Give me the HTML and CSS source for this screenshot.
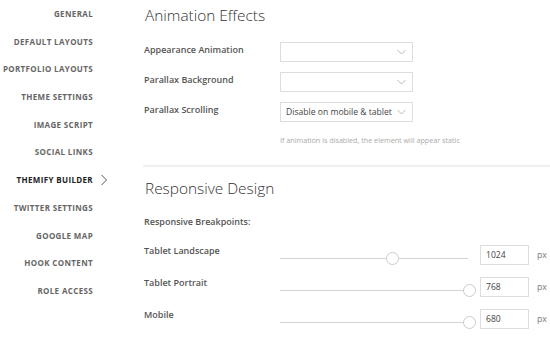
FILE: index.html
```html
<!DOCTYPE html>
<html lang="en">
<head>
  <meta charset="UTF-8" />
  <title>Themify Builder Settings</title>
  <link rel="stylesheet" href="styles.css">
</head>
<body>
  <div class="page">
    <ul class="sidebar">
      <li>General</li>
      <li>Default Layouts</li>
      <li>Portfolio Layouts</li>
      <li>Theme Settings</li>
      <li>Image Script</li>
      <li>Social Links</li>
      <li class="active">Themify Builder
        <svg class="chevron" width="8" height="12" viewBox="0 0 8 12"><path d="M1.5 1 L6.5 6 L1.5 11" fill="none" stroke="#555" stroke-width="1"/></svg>
      </li>
      <li>Twitter Settings</li>
      <li>Google Map</li>
      <li>Hook Content</li>
      <li>Role Access</li>
    </ul>

    <div class="main">
      <h2>Animation Effects</h2>
      <div class="field">
        <label>Appearance Animation</label>
        <div class="select"><span></span><svg class="caret" width="9" height="6" viewBox="0 0 9 6"><path d="M0.5 1 L4.5 5 L8.5 1" fill="none" stroke="#bbb" stroke-width="1"/></svg></div>
      </div>
      <div class="field">
        <label>Parallax Background</label>
        <div class="select"><span></span><svg class="caret" width="9" height="6" viewBox="0 0 9 6"><path d="M0.5 1 L4.5 5 L8.5 1" fill="none" stroke="#bbb" stroke-width="1"/></svg></div>
      </div>
      <div class="field">
        <label>Parallax Scrolling</label>
        <div class="select"><span>Disable on mobile &amp; tablet</span><svg class="caret" width="9" height="6" viewBox="0 0 9 6"><path d="M0.5 1 L4.5 5 L8.5 1" fill="none" stroke="#bbb" stroke-width="1"/></svg></div>
      </div>
      <p class="hint">If animation is disabled, the element will appear static</p>

      <hr class="divider">

      <h2>Responsive Design</h2>
      <div class="sub">Responsive Breakpoints:</div>
      <div class="bp">
        <label>Tablet Landscape</label>
        <div class="range"><div class="track"></div><span class="thumb" style="left: 112px"></span></div>
        <div class="num">1024</div>
        <span class="unit">px</span>
      </div>
      <div class="bp">
        <label>Tablet Portrait</label>
        <div class="range"><div class="track"></div><span class="thumb" style="left: 189px"></span></div>
        <div class="num">768</div>
        <span class="unit">px</span>
      </div>
      <div class="bp">
        <label>Mobile</label>
        <div class="range"><div class="track"></div><span class="thumb" style="left: 189px"></span></div>
        <div class="num">680</div>
        <span class="unit">px</span>
      </div>
    </div>
  </div>
</body>
</html>
```
FILE: styles.css
```css
body {
  margin: 0;
  background: #fff;
  font-family: 'Open Sans', sans-serif;
  color: #444;
}

.page {
  display: flex;
  width: 550px;
  height: 342px;
  overflow: hidden;
}

.sidebar {
  list-style: none;
  margin: 0;
  padding: 0;
  width: 93px;
  flex-shrink: 0;
}

.sidebar li {
  position: relative;
  text-align: right;
  height: 27.7px;
  line-height: 28px;
  font-size: 8px;
  font-weight: bold;
  letter-spacing: 0.35px;
  text-transform: uppercase;
  color: #666;
  white-space: nowrap;
}

.sidebar li.active {
  color: #222;
}

.chevron {
  position: absolute;
  left: 100px;
  top: 8px;
}

.main {
  margin-left: 51px;
  flex: 1;
}

h2 {
  font-size: 15.4px;
  font-weight: 300;
  color: #333;
  margin: 5px 0 0 1px;
  line-height: 22px;
}

.field {
  display: flex;
  align-items: center;
  height: 20px;
  margin-top: 10px;
}

.field:first-of-type {
  margin-top: 15px;
}

label {
  font-size: 9px;
  font-weight: 600;
  color: #555;
  width: 136px;
  flex-shrink: 0;
  position: relative;
  top: -3px;
}

.select {
  height: 18px;
  border: 1px solid #ddd;
  display: flex;
  align-items: center;
  justify-content: space-between;
  padding: 0 6px 0 5px;
  box-sizing: content-box;
  width: 120px;
  font-size: 8.6px;
  color: #444;
}

.hint {
  margin: 13px 0 0 136px;
  font-size: 7.2px;
  color: #aaa;
}

.divider {
  border: 0;
  height: 2px;
  background: #f0f0f0;
  margin: 20px 0 0 -1px;
}

.divider + h2 {
  margin-top: 11px;
}

.sub {
  font-size: 9px;
  font-weight: 600;
  color: #555;
  margin-top: 15px;
}

.bp {
  display: flex;
  align-items: flex-start;
  height: 20px;
  margin-top: 17px;
}

.bp + .bp {
  margin-top: 12px;
}

.bp label {
  top: 0;
  line-height: 12px;
}

.range {
  position: relative;
  width: 188px;
  height: 20px;
}

.track {
  position: absolute;
  left: 0;
  right: 0;
  top: 13px;
  height: 1px;
  background: #d4d4d4;
}

.thumb {
  position: absolute;
  top: 7px;
  width: 11px;
  height: 11px;
  margin-left: -6px;
  border: 1px solid #ccc;
  border-radius: 50%;
  background: #fff;
}

.num {
  width: 42px;
  height: 18px;
  border: 1px solid #ddd;
  margin-left: 12px;
  padding-left: 5px;
  font-size: 8.6px;
  line-height: 18px;
  color: #444;
}

.unit {
  margin-left: 8px;
  font-size: 8.6px;
  line-height: 20px;
  color: #777;
}
```
